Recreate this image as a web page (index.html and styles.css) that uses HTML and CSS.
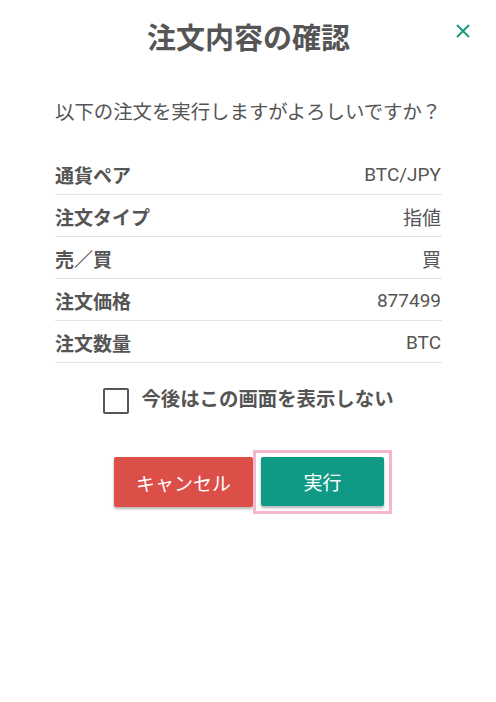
FILE: index.html
```html
<!DOCTYPE html>
<html lang="ja">

<head>
    <meta charset="UTF-8">
    <meta name="viewport" content="width=device-width, initial-scale=1.0">
    <title>注文内容の確認</title>
    <link rel="stylesheet" href="styles.css">
</head>

<body>
    <div class="dialog">
        <!-- ヘッダー -->
        <div class="header">
            <h1 class="title">注文内容の確認</h1>
            <span class="close">
                <svg width="14" height="14" viewBox="0 0 14 14">
                    <path d="M1 1 L13 13 M13 1 L1 13" stroke="#1b9a80" stroke-width="2" fill="none" />
                </svg>
            </span>
        </div>

        <p class="message">以下の注文を実行しますがよろしいですか？</p>

        <!-- 注文内容 -->
        <div class="rows">
            <div class="row"><span class="label">通貨ペア</span><span class="value">BTC/JPY</span></div>
            <div class="row"><span class="label">注文タイプ</span><span class="value">指値</span></div>
            <div class="row"><span class="label">売／買</span><span class="value">買</span></div>
            <div class="row"><span class="label">注文価格</span><span class="value">877499</span></div>
            <div class="row"><span class="label">注文数量</span><span class="value">BTC</span></div>
        </div>

        <label class="check">
            <span class="box"></span>
            <span class="check-text">今後はこの画面を表示しない</span>
        </label>

        <div class="buttons">
            <button class="btn cancel">キャンセル</button>
            <span class="focus">
                <button class="btn ok">実行</button>
            </span>
        </div>
    </div>
</body>

</html>
```

FILE: styles.css
```css
* {
    margin: 0;
    padding: 0;
    box-sizing: border-box;
}

body {
    background-color: #fff;
    font-family: Roboto, "Noto Sans CJK JP", sans-serif;
    color: #555;
}

.dialog {
    padding: 0 54px 0 55px;
}

.header {
    position: relative;
    padding-top: 19px;
}

.title {
    font-size: 29px;
    line-height: 40px;
    font-weight: bold;
    text-align: center;
    color: #555;
}

.close {
    position: absolute;
    top: 24px;
    right: -28px;
    width: 14px;
    height: 14px;
    line-height: 0;
}

.message {
    margin-top: 40px;
    font-size: 19.4px;
    line-height: 28px;
    white-space: nowrap;
}

.rows {
    margin-top: 26px;
}

.row {
    display: flex;
    justify-content: space-between;
    align-items: center;
    height: 42px;
    border-bottom: 1px solid #e3e3e3;
    font-size: 19px;
    padding-top: 1px;
}

.label {
    font-weight: bold;
}

.value {
    padding-right: 1px;
}

.check {
    display: flex;
    justify-content: center;
    align-items: center;
    gap: 12px;
    margin-top: 24px;
}

.box {
    width: 26px;
    height: 26px;
    border: 2px solid #555;
    border-radius: 2px;
}

.check-text {
    font-size: 19.4px;
    font-weight: bold;
    line-height: 26px;
    padding-bottom: 2px;
}

.buttons {
    display: flex;
    align-items: center;
    margin-top: 35px;
    padding-left: 59px;
}

.btn {
    border: none;
    border-radius: 2px;
    font-family: Roboto, "Noto Sans CJK JP", sans-serif;
    font-size: 19px;
    color: #fff;
    box-shadow: 0 2px 3px rgba(0, 0, 0, 0.3);
}

.cancel {
    width: 139px;
    height: 50px;
    background-color: #dc4e48;
}

.focus {
    display: block;
    border: 3px solid #f5b6d0;
    padding: 4px 5px 5px 5px;
}

.ok {
    display: block;
    width: 123px;
    height: 49px;
    background-color: #109a86;
}
```
